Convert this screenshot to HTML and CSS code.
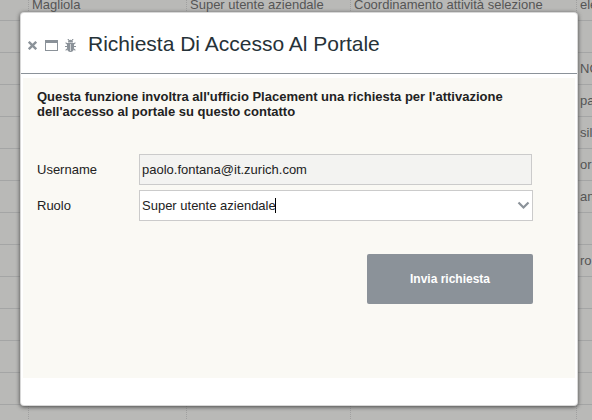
FILE: index.html
```
<!DOCTYPE html>
<html lang="it">
<head>
<meta charset="UTF-8" />
<meta name="viewport" content="width=device-width, initial-scale=1" />
<title>Richiesta Di Accesso Al Portale</title>
<link rel="stylesheet" href="styles.css">
</head>
<body>

<!-- Elenco contatti sotto il velo -->
<table class="contacts" aria-hidden="true">
  <colgroup>
    <col class="col-id" />
    <col class="col-name" />
    <col class="col-role" />
    <col class="col-area" />
    <col class="col-mail" />
  </colgroup>
  <tbody>
    <tr><td></td><td>Magliola</td><td>Super utente aziendale</td><td>Coordinamento attività selezione</td><td>ele</td></tr>
    <tr><td></td><td></td><td></td><td></td><td></td></tr>
    <tr><td></td><td></td><td></td><td></td><td>NO</td></tr>
    <tr><td></td><td></td><td></td><td></td><td>pa</td></tr>
    <tr><td></td><td></td><td></td><td></td><td>sil</td></tr>
    <tr><td></td><td></td><td></td><td></td><td>or</td></tr>
    <tr><td></td><td></td><td></td><td></td><td>an</td></tr>
    <tr><td></td><td></td><td></td><td></td><td></td></tr>
    <tr><td></td><td></td><td></td><td></td><td>ro</td></tr>
    <tr><td></td><td></td><td></td><td></td><td></td></tr>
    <tr><td></td><td></td><td></td><td></td><td></td></tr>
    <tr><td></td><td></td><td></td><td></td><td></td></tr>
    <tr><td></td><td></td><td></td><td></td><td></td></tr>
    <tr><td></td><td></td><td></td><td></td><td></td></tr>
  </tbody>
</table>

<div class="overlay">
  <section class="dialog" role="dialog" aria-labelledby="dialog-title">
    <header class="dialog-header">
      <div class="dialog-tools">
        <button type="button" class="tool-btn" aria-label="Chiudi">
          <svg width="9" height="9" viewBox="0 0 9 9" aria-hidden="true">
            <path d="M.8 .8L8.2 8.2M8.2 .8L.8 8.2" stroke="currentColor" stroke-width="2.4" />
          </svg>
        </button>
        <button type="button" class="tool-btn" aria-label="Ingrandisci">
          <svg width="13" height="11" viewBox="0 0 13 11" aria-hidden="true">
            <path d="M0 0h13v11H0zM1 3v7h11V3z" fill="currentColor" fill-rule="evenodd" />
          </svg>
        </button>
        <button type="button" class="tool-btn" aria-label="Debug">
          <svg width="11" height="13" viewBox="0 0 11 13" aria-hidden="true">
            <path d="M3 3.4C3 1.6 4 .8 5.5 .8S8 1.6 8 3.4zM2 4h7v5c0 2.4-1.4 4-3.5 4S2 11.4 2 9z" fill="currentColor" />
            <path d="M3.8 1.6L3 0M7.2 1.6L8 0M.6 3.6l2 1.8M10.4 3.6l-2 1.8M0 7.5h3M11 7.5H8M.6 11.4l2-1.8M10.4 11.4l-2-1.8" fill="none" stroke="currentColor" stroke-width="1.2" />
            <path d="M5.5 5v7" stroke="#fff" stroke-width=".6" />
          </svg>
        </button>
      </div>
      <h1 class="dialog-title" id="dialog-title">Richiesta Di Accesso Al Portale</h1>
    </header>

    <form class="dialog-body">
      <p class="intro">Questa funzione involtra all'ufficio Placement una richiesta per l'attivazione dell'accesso al portale su questo contatto</p>

      <div class="field">
        <label for="username">Username</label>
        <input type="text" id="username" class="text-input readonly" value="paolo.fontana@it.zurich.com" readonly />
      </div>

      <div class="field">
        <label for="ruolo">Ruolo</label>
        <div class="combo">
          <input type="text" id="ruolo" class="combo-input" role="combobox" aria-expanded="false" value="Super utente aziendale" autocomplete="off" />
          <span class="caret"></span>
          <button type="button" class="combo-btn" aria-label="Apri elenco ruoli">
            <svg width="13" height="9" viewBox="0 0 13 9" aria-hidden="true">
              <path d="M1.5 1.5l5 5 5-5" fill="none" stroke="currentColor" stroke-width="2.2" />
            </svg>
          </button>
        </div>
      </div>

      <div class="actions">
        <button type="submit" class="submit-btn">Invia richiesta</button>
      </div>
    </form>
  </section>
</div>

</body>
</html>
```
FILE: styles.css
```
* {
  box-sizing: border-box;
}
body {
  margin: 0;
  height: 100vh;
  overflow: hidden;
  position: relative;
  background: #b9b9b7;
  color: #222;
  font-family: "Liberation Sans", Arial, sans-serif;
  font-size: 13px;
}
button, input {
  font: inherit;
  color: inherit;
}

/* Tabella di sfondo */
.contacts {
  width: 100%;
  margin-top: -11px;
  table-layout: fixed;
  border-collapse: separate;
  border-spacing: 0;
  color: #555;
}
.contacts td {
  height: 32px;
  padding: 0 3px;
  border-bottom: 1px solid #a4a5a5;
  border-right: 1px dotted #a0a0a0;
  white-space: nowrap;
}
.contacts td:last-child {
  border-right: 0;
}
.col-id {
  width: 29px;
}
.col-name {
  width: 158px;
}
.col-role {
  width: 164px;
}
.col-area {
  width: 226px;
}

/* Finestra */
.overlay {
  position: absolute;
  inset: 0;
  padding: 13px 15px 14px 21px;
}
.dialog {
  background: #fff;
  border-radius: 3px;
  padding-bottom: 27px;
  box-shadow: 0 0 0 1px #d8d8d8, 0 1px 4px 1px #444;
}
.dialog-header {
  display: flex;
  align-items: center;
  gap: 12px;
  height: 61px;
  padding: 2px 7px 0;
  border-bottom: 1px solid #8b9299;
}
.dialog-tools {
  display: flex;
  align-items: center;
  gap: 7px;
  padding-top: 2px;
}
.tool-btn {
  display: flex;
  padding: 0;
  border: 0;
  background: none;
  color: #8b9299;
  cursor: pointer;
}
.tool-btn:first-child {
  margin-right: 1px;
}
.dialog-title {
  margin: 0;
  font-size: 21px;
  font-weight: 400;
  color: #263238;
}
.dialog-body {
  min-height: 300px;
  margin: 4px 2px 0;
  padding: 11px 42px 0 14px;
  background: #faf9f4;
}
.intro {
  margin: 0 0 35px;
  font-weight: 700;
  line-height: 15px;
}
.field {
  display: flex;
  align-items: center;
  margin-bottom: 5px;
}
.field label {
  width: 102px;
  flex: none;
}
.text-input,
.combo {
  flex: 1;
  min-width: 0;
  height: 31px;
  border: 1px solid #cbcbcb;
  background: #fff;
}
.text-input {
  padding: 0 2px;
  outline: 0;
}
.readonly {
  margin-right: 1px;
  background: #f3f3f1;
}
.combo {
  display: flex;
  position: relative;
}
.combo-input {
  flex: 1;
  min-width: 0;
  padding: 0 2px;
  border: 0;
  outline: 0;
  background: none;
}
.caret {
  position: absolute;
  left: 135px;
  top: 7px;
  width: 1px;
  height: 15px;
  background: #000;
}
.combo-btn {
  display: flex;
  align-items: center;
  padding: 0 2px;
  border: 0;
  background: none;
  color: #8b9299;
  cursor: pointer;
}

.actions {
  display: flex;
  justify-content: flex-end;
  margin-top: 33px;
}
.submit-btn {
  width: 166px;
  height: 50px;
  border: 0;
  border-radius: 2px;
  background: #8b9299;
  color: #fff;
  font-size: 12px;
  font-weight: 700;
  cursor: pointer;
}
```
